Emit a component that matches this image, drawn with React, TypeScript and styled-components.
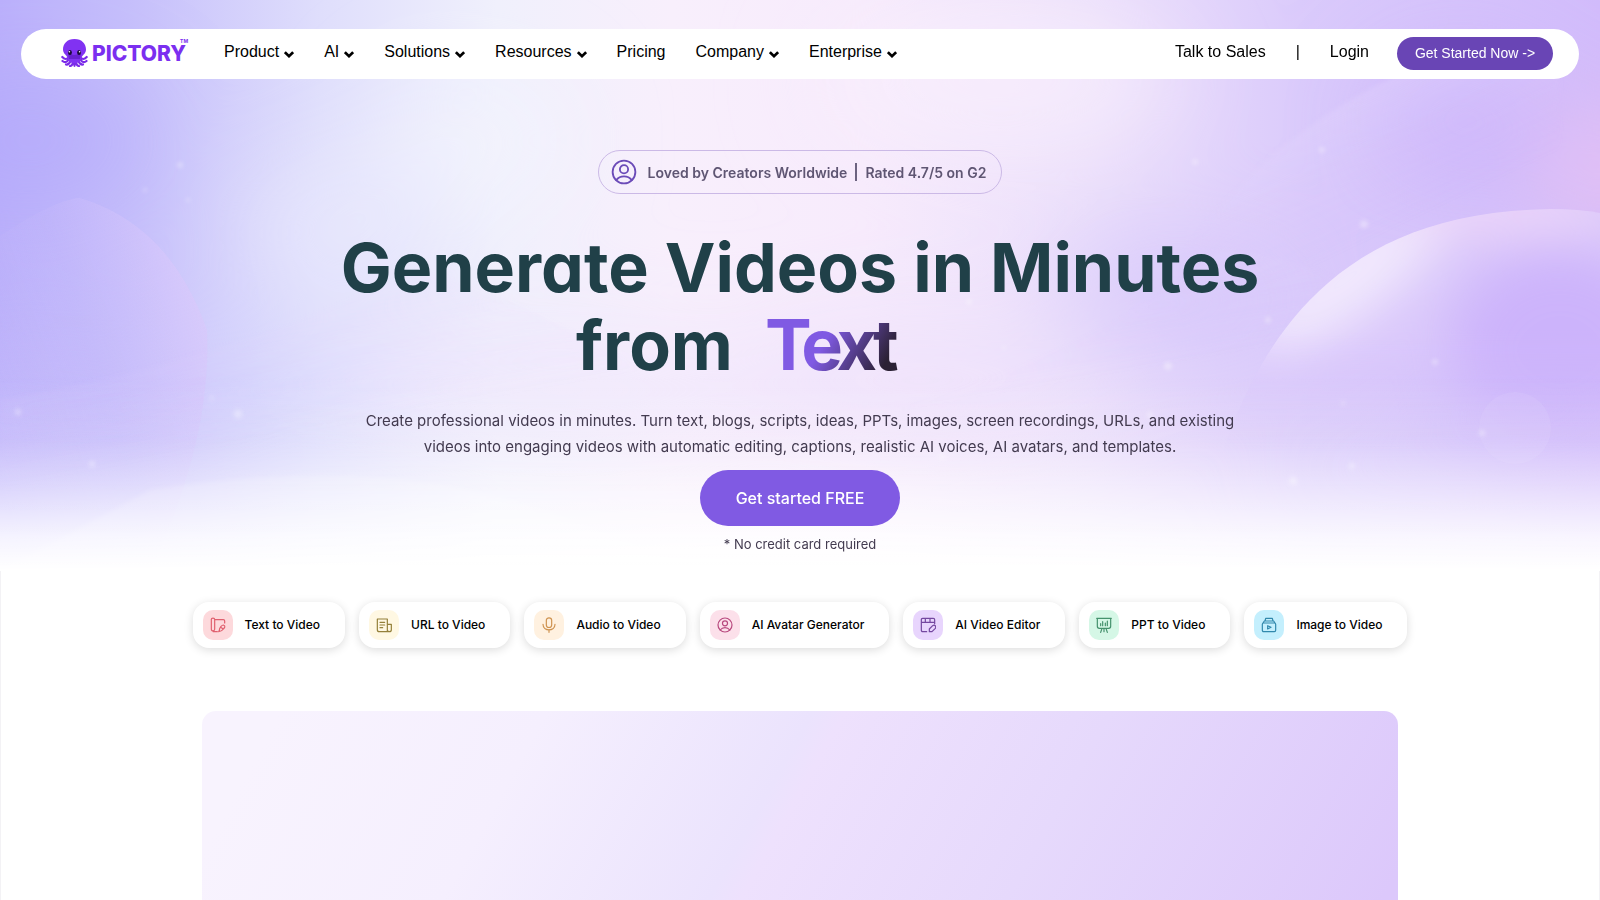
import React from "react";
import styled, { createGlobalStyle } from "styled-components";

const GlobalStyle = createGlobalStyle`
  * { box-sizing: border-box; }
  body { margin: 0; background: #fff; font-family: Inter, sans-serif; color: #000; overflow-x: hidden; }
  a { color: inherit; text-decoration: none; }
  button { font-family: inherit; border: 0; cursor: pointer; }
`;

const Page = styled.div`
  height: 100vh;
  overflow: hidden;
  box-shadow: inset 1px 0 #f3f2f5, inset -1px 0 #f3f2f5;
`;

const Hero = styled.section`
  position: relative;
  isolation: isolate;
  padding: 29px 21px 18px;
`;

const Backdrop = styled.svg`
  position: absolute;
  inset: 0;
  z-index: -1;
  width: 100%;
  height: 100%;
`;

const Header = styled.header`
  display: flex;
  align-items: center;
  height: 50px;
  padding: 0 26px 2px 40px;
  border-radius: 25px;
  background: #fff;
  font: 16px/20px "Liberation Sans", Arial, sans-serif;
`;

const Brand = styled.a`
  display: flex;
  align-items: center;
  width: 148px;
  gap: 4px;
`;

const Octopus = styled.svg`
  flex: none;
  width: 27px;
  height: 28px;
`;

const WordMark = styled.span`
  padding-top: 2px;
  font: 800 21px/28px Inter, sans-serif;
  color: #7b2ff0;
  display: flex;
`;

const Trade = styled.sup`
  margin: -2px 0 0 -6px;
  font: 700 5px/6px Inter, sans-serif;
`;

const NavList = styled.nav`
  display: flex;
  padding-bottom: 3px;
`;

const NavLink = styled.a`
  display: flex;
  align-items: center;
  gap: 5px;
  padding: 0 15px;
`;

const Caret = styled.svg`
  width: 10px;
  height: 7px;
  margin-top: 6px;
`;

const Account = styled.div`
  display: flex;
  align-items: center;
  margin-left: auto;
  padding-bottom: 3px;
  gap: 30px;
`;

const StartButton = styled.button`
  height: 33px;
  width: 156px;
  margin-left: 28px;
  padding: 0;
  border-radius: 17px;
  background: #6945b5;
  color: #fff;
  font-size: 14px;
`;

const Intro = styled.div`
  display: flex;
  flex-direction: column;
  align-items: center;
  padding-top: 71px;
  text-align: center;
`;

const Rating = styled.div`
  display: flex;
  align-items: center;
  height: 44px;
  padding: 0 15px 0 12px;
  gap: 11px;
  border: 1px solid #cbb9e6;
  border-radius: 22px;
  color: #5f5673;
  font-size: 14px;
  font-weight: 600;
`;

const RatingText = styled.span`
  display: flex;
  align-items: center;
  gap: 8px;
`;

const Divider = styled.span`
  width: 2px;
  height: 18px;
  background: #6c6380;
`;

const Title = styled.h1`
  margin: 34px 0 0;
  color: #204048;
  font-size: 68px;
  line-height: 78px;
  font-weight: 700;
  font-feature-settings: "cv11";
`;

const TitleLine = styled.span`
  display: flex;
  justify-content: center;
`;

const Rotating = styled.span`
  width: 259px;
  margin-left: 32px;
  text-align: left;
`;

const Gradient = styled.span`
  background: linear-gradient(120deg, #805ae3 45%, #2b2134 85%);
  background-clip: text;
  -webkit-background-clip: text;
  color: transparent;
  font-size: 70px;
  letter-spacing: -5px;
  padding-right: 5px;
`;

const Lead = styled.p`
  max-width: 900px;
  margin: 24px 0 0;
  color: #433b50;
  font-size: 15px;
  line-height: 26px;
`;

const CallToAction = styled.button`
  width: 200px;
  height: 56px;
  margin-top: 10px;
  border-radius: 28px;
  background: #805ae3;
  color: #fff;
  font-size: 16px;
  font-weight: 500;
`;

const Note = styled.p`
  margin: 9px 0 0;
  color: #433b50;
  font-size: 13px;
  line-height: 18px;
`;

const Tools = styled.nav`
  display: flex;
  justify-content: center;
  gap: 14px;
  padding-top: 31px;
`;

const Tool = styled.a`
  display: flex;
  align-items: center;
  height: 46px;
  padding: 0 25px 1px 10px;
  gap: 12px;
  border-radius: 16px;
  background: #fff;
  box-shadow: 0 2px 10px rgba(0, 0, 0, 0.14);
  font-size: 12px;
  font-weight: 500;
  white-space: nowrap;
`;

const Tile = styled.span<{ $bg: string; $fg: string }>`
  display: grid;
  place-items: center;
  width: 30px;
  height: 30px;
  border-radius: 10px;
  background: ${(p) => p.$bg};
  color: ${(p) => p.$fg};
`;

const Glyph = styled.svg<{ $size: number }>`
  width: ${(p) => p.$size}px;
  height: ${(p) => p.$size}px;
  fill: none;
  stroke: currentColor;
  stroke-linecap: round;
  stroke-linejoin: round;
`;

const Preview = styled.section`
  width: calc(100% - 404px);
  max-width: 1196px;
  height: 670px;
  margin: 63px auto 0;
  border-radius: 14px;
  background: linear-gradient(119deg, #f8f3fe 5%, #f5effe 22%, #ebe3fd 39%, #eee1fd 41%, #e6d9fc 58%, #dcc8fb 82%);
`;

const User = () => (
  <>
    <circle cx="12" cy="12" r="10.5" />
    <circle cx="12" cy="9.5" r="3.8" />
    <path d="M4.8 19.5c3.6-4.7 10.8-4.7 14.4 0" />
  </>
);

const tools = [
  {
    label: "Text to Video", bg: "#fdd9dc", fg: "#e0606f",
    art: <path d="M2 3.5C2 .9 7 .9 7 3.5v15C7 21.500 2 21.500 2 18.500zM7 4h13q2 0 2 2v3M5 22h6M14 20c0-4 4-8 6-8 4 1 2 4 0 6-2 3-4 4-7 4zM17 16l3 2" />,
  },
  {
    label: "URL to Video", bg: "#fff8e3", fg: "#94803a",
    art: <path d="M17 21V3H2v16q0 3 3 3h15q3 0 3-3V11h-6M17 11v8q0 3 3 3M6 8h7M6 12h7M6 16h4" />,
  },
  {
    label: "Audio to Video", bg: "#fff1e0", fg: "#cf9350",
    art: <path d="M8 5c0-5 8-5 8 0v7c0 5-8 5-8 0zM3 11c0 11 18 11 18 0M12 19v4" />,
  },
  { label: "AI Avatar Generator", bg: "#fce0ea", fg: "#b8487e", art: <User /> },
  {
    label: "AI Video Editor", bg: "#e8d5fd", fg: "#7447a0",
    art: <path d="M10 22H4q-2 0-2-2V4q0-2 2-2h16q2 0 2 2v6M2 8h20M8 2v6M15 2v6M14 22v-4l5-5c3-2 6 1 4 4l-5 5z" />,
  },
  {
    label: "PPT to Video", bg: "#d5f7e6", fg: "#45926d",
    art: <path d="M1 2h22M2 2v12q0 3 3 3h14q3 0 3-3V2M7 10v3M10 7v6M14 9v4M17 6v7M9 17l-2 6M15 17l2 6M12 18v4" />,
  },
  {
    label: "Image to Video", bg: "#c4effd", fg: "#3189ad",
    art: <path d="M4 9h16q2 0 2 2v9q0 2-2 2H4q-2 0-2-2v-9q0-2 2-2M3 9l2-3h14l2 3M6 6l1-4h10l1 4M10 13v5l5-2.500z" />,
  },
];

const menu: [string, boolean][] = [
  ["Product", true], ["AI", true], ["Solutions", true], ["Resources", true],
  ["Pricing", false], ["Company", true], ["Enterprise", true],
];

const stars = [
  [180, 165, 3], [188, 200, 2], [145, 190, 2], [238, 414, 4], [92, 464, 3], [18, 412, 3], [212, 398, 2],
  [969, 302, 3], [1004, 348, 2], [1168, 366, 4], [1268, 320, 3], [1293, 481, 4], [1352, 466, 3], [1435, 362, 3],
  [1364, 224, 4], [1195, 162, 3], [1322, 150, 3], [1482, 433, 3], [1343, 403, 2], [942, 457, 3], [1150, 415, 3],
];

const HeroArt = () => (
  <Backdrop viewBox="0 0 1600 571" preserveAspectRatio="none" aria-hidden="true">
    <defs>
      <linearGradient id="base" gradientUnits="userSpaceOnUse" x1="0" y1="150" x2="1600" y2="150">
        <stop offset="0" stopColor="#bbb0fb" />
        <stop offset="0.08" stopColor="#c6bffb" />
        <stop offset="0.2" stopColor="#dfdefc" />
        <stop offset="0.31" stopColor="#f0f0fc" />
        <stop offset="0.42" stopColor="#f8effc" />
        <stop offset="0.54" stopColor="#f7ebfc" />
        <stop offset="0.68" stopColor="#ebdffb" />
        <stop offset="0.82" stopColor="#dacafb" />
        <stop offset="1" stopColor="#d2bcfb" />
      </linearGradient>
      <linearGradient id="fade" x1="0" y1="0" x2="0" y2="1">
        <stop offset="0.66" stopColor="#fff" stopOpacity="0" />
        <stop offset="0.77" stopColor="#fff" stopOpacity="0.14" />
        <stop offset="0.86" stopColor="#fff" stopOpacity="0.5" />
        <stop offset="0.94" stopColor="#fff" stopOpacity="0.85" />
        <stop offset="1" stopColor="#fff" />
      </linearGradient>
      <linearGradient id="orbLeft" x1="1" y1="0.2" x2="0" y2="0.8">
        <stop offset="0" stopColor="#dccbfb" stopOpacity="0.8" />
        <stop offset="0.5" stopColor="#c6b9fb" stopOpacity="0.3" />
        <stop offset="1" stopColor="#c6b9fb" stopOpacity="0" />
      </linearGradient>
      <linearGradient id="ribbon" x1="0.2" y1="0" x2="0.6" y2="0.6">
        <stop offset="0" stopColor="#f1e6fd" stopOpacity="0.6" />
        <stop offset="1" stopColor="#d4c0fb" stopOpacity="0" />
      </linearGradient>
      <clipPath id="orb"><path d="M1220 460C1260 340 1335 212 1550 209Q1580 209 1600 213V571H1220z" /></clipPath>
      <linearGradient id="orbMask" x1="0" y1="0" x2="0" y2="1">
        <stop offset="0.35" stopColor="#fff" />
        <stop offset="0.68" stopColor="#000" />
      </linearGradient>
      <mask id="orbFade"><rect x="1180" y="200" width="420" height="371" fill="url(#orbMask)" /></mask>
      <filter id="soft" filterUnits="userSpaceOnUse" x="-200" y="-200" width="2000" height="1000"><feGaussianBlur stdDeviation="50" /></filter>
      <filter id="glow" filterUnits="userSpaceOnUse" x="1000" y="0" width="800" height="700"><feGaussianBlur stdDeviation="26" /></filter>
      <filter id="mist" filterUnits="userSpaceOnUse" x="-50" y="-50" width="1700" height="700"><feGaussianBlur stdDeviation="2" /></filter>
    </defs>
    <rect width="1600" height="571" fill="url(#base)" />
    <g filter="url(#soft)">
      <ellipse cx="30" cy="140" rx="120" ry="60" fill="#b0a6fc" opacity="0.6" />
      <ellipse cx="60" cy="410" rx="200" ry="60" fill="#c6bdfc" opacity="0.6" />
      <ellipse cx="290" cy="390" rx="130" ry="50" fill="#d9dcfd" opacity="0.7" />
      <ellipse cx="340" cy="230" rx="100" ry="70" fill="#e9e8fd" opacity="0.8" />
      <ellipse cx="470" cy="140" rx="100" ry="70" fill="#f3f5fe" opacity="0.6" />
      <ellipse cx="560" cy="390" rx="240" ry="60" fill="#f0e9fc" opacity="0.8" />
      <ellipse cx="920" cy="380" rx="200" ry="60" fill="#eee2fc" opacity="0.9" />
      <ellipse cx="1000" cy="80" rx="180" ry="70" fill="#f9effd" opacity="0.8" />
      <ellipse cx="1180" cy="300" rx="130" ry="60" fill="#d5c6fb" opacity="0.8" />
      <ellipse cx="1460" cy="120" rx="90" ry="60" fill="#c9b2fb" opacity="0.8" />
      <ellipse cx="1610" cy="170" rx="60" ry="45" fill="#f0c4ee" />
      <ellipse cx="1540" cy="400" rx="120" ry="50" fill="#c9b2fb" opacity="0.8" />
      <ellipse cx="1380" cy="470" rx="120" ry="20" fill="#d8d2fc" opacity="0.8" />
    </g>
    <path d="M0 236C30 216 60 199 80 198Q170 225 207 330Q212 440 150 571H0z" fill="url(#orbLeft)" />
    <g filter="url(#mist)">
      <path d="M1180 260Q1260 140 1400 74L1560 60V330H1180z" fill="url(#ribbon)" opacity="0.8" />
      <path d="M860 420Q1110 350 1220 250Q1380 260 1500 420z" fill="url(#ribbon)" opacity="0.3" />
      <path d="M0 400Q230 360 420 270Q620 330 800 490H0z" fill="url(#ribbon)" opacity="0.3" />
      <path d="M150 490Q400 450 570 520L700 571H0z" fill="#fff" opacity="0.18" />
    </g>
    <g mask="url(#orbFade)">
      <g clipPath="url(#orb)">
        <rect x="1180" y="200" width="420" height="371" fill="#dac8fb" />
        <g filter="url(#glow)">
          <ellipse cx="1560" cy="350" rx="110" ry="100" fill="#ccb3fb" />
          <ellipse cx="1345" cy="280" rx="120" ry="38" transform="rotate(-36 1345 280)" fill="#f3ebfd" />
          <ellipse cx="1500" cy="209" rx="120" ry="16" fill="#f5dcf8" />
        </g>
      </g>
    </g>
    <circle cx="1515" cy="428" r="36" fill="#dcccfb" opacity="0.25" />
    <g fill="#fff" opacity="0.35" filter="url(#mist)">
      {stars.map(([x, y, r]) => <circle key={`${x}-${y}`} cx={x} cy={y} r={r} />)}
    </g>
    <rect width="1600" height="571" fill="url(#fade)" />
  </Backdrop>
);

export default function App() {
  return (
    <Page>
      <GlobalStyle />
      <Hero>
        <HeroArt />
        <Header>
          <Brand href="#" aria-label="Pictory home">
            <Octopus viewBox="0 0 27 28" aria-hidden="true">
              <g fill="none" stroke="#7a2ae8" strokeWidth="2.200" strokeLinecap="round">
                <path d="M8 18Q5 22 1.300 18M8 20Q5 25 1.500 22M10 21Q8 26 5 25.500M12 21Q12 27 9 27M15 21Q15 27 18 27M17 21Q19 26 22 25.500M19 20Q22 25 25.500 22M19 18Q22 22 25.700 18M13.500 22v4.800" />
              </g>
              <path d="M13.500 0C21 0 25 5 25 10.500 25 15 21 16 20.500 19c-.5 3-3 5-7 5s-6.500-2-7-5C6 16 2 15 2 10.500 2 5 6 0 13.500 0z" fill="#8132f2" />
              <path d="M7 14q6 4 13 0l-1 6H8z" fill="#6821d1" />
              <ellipse cx="9" cy="13.500" rx="1.900" ry="2.500" fill="#1a0b3a" />
              <ellipse cx="18" cy="13.500" rx="1.900" ry="2.500" fill="#1a0b3a" />
              <circle cx="8.400" cy="12.800" r=".8" fill="#fff" />
              <circle cx="18.600" cy="12.800" r=".8" fill="#fff" />
            </Octopus>
            <WordMark>PICTORY<Trade>TM</Trade></WordMark>
          </Brand>
          <NavList aria-label="Main">
            {menu.map(([label, more]) => (
              <NavLink href="#" key={label}>
                {label}
                {more && (
                  <Caret viewBox="0 0 10 7" aria-hidden="true">
                    <path d="M.9 1.200L5 5.200l4.100-4" fill="none" stroke="#000" strokeWidth="2.600" />
                  </Caret>
                )}
              </NavLink>
            ))}
          </NavList>
          <Account>
            <a href="#">Talk to Sales</a>
            <span>|</span>
            <a href="#">Login</a>
          </Account>
          <StartButton>Get Started Now -&gt;</StartButton>
        </Header>
        <Intro>
          <Rating>
            <Glyph $size={26} viewBox="0 0 24 24" strokeWidth="1.700" color="#6b4bb8" aria-hidden="true"><User /></Glyph>
            <RatingText>Loved by Creators Worldwide<Divider />Rated 4.7/5 on G2</RatingText>
          </Rating>
          <Title>
            <TitleLine>Generate Videos in Minutes</TitleLine>
            <TitleLine>from<Rotating><Gradient>Text</Gradient></Rotating></TitleLine>
          </Title>
          <Lead>
            Create professional videos in minutes. Turn text, blogs, scripts, ideas, PPTs, images, screen recordings, URLs, and existing
            videos into engaging videos with automatic editing, captions, realistic AI voices, AI avatars, and templates.
          </Lead>
          <CallToAction>Get started FREE</CallToAction>
          <Note>* No credit card required</Note>
        </Intro>
      </Hero>
      <Tools aria-label="Video tools">
        {tools.map((t) => (
          <Tool href="#" key={t.label}>
            <Tile $bg={t.bg} $fg={t.fg}>
              <Glyph $size={16} viewBox="0 0 24 24" strokeWidth="1.800" aria-hidden="true">{t.art}</Glyph>
            </Tile>
            {t.label}
          </Tool>
        ))}
      </Tools>
      <Preview />
    </Page>
  );
}
